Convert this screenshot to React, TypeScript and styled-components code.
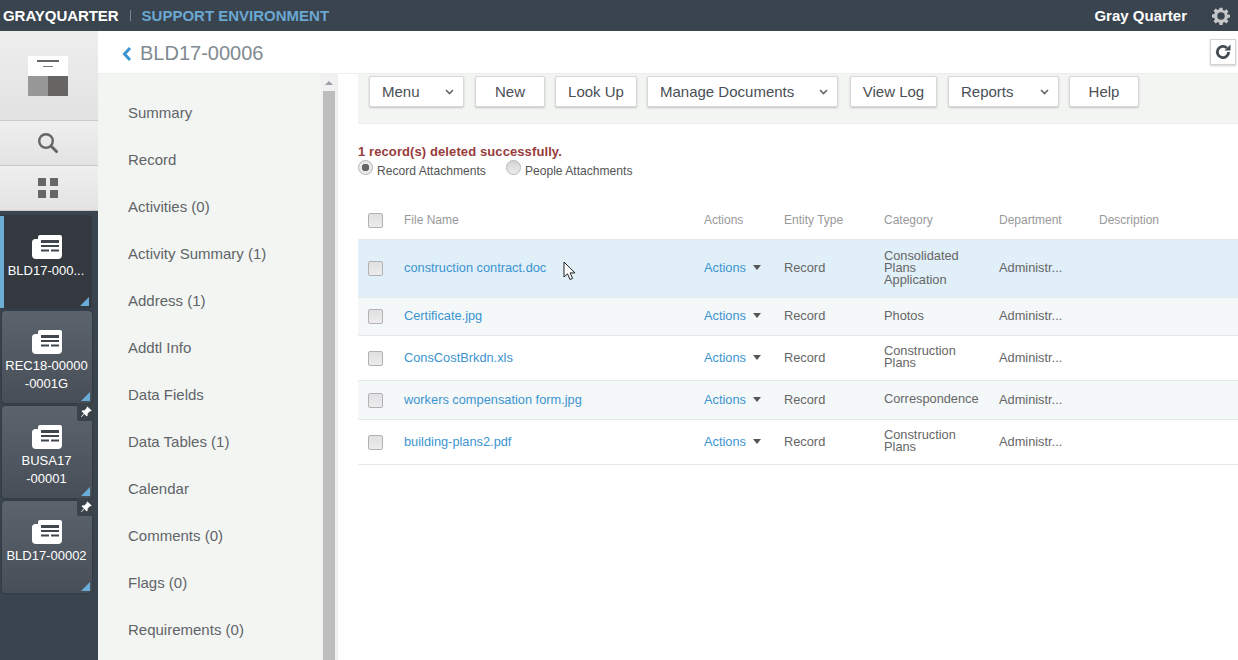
import React from "react";
import styled, { createGlobalStyle } from "styled-components";
import { BsPinAngleFill } from "react-icons/bs";

const Global = createGlobalStyle`
  html, body { margin: 0; padding: 0; background: #fff; }
  body { font-family: "Liberation Sans", Arial, sans-serif; overflow: hidden; }
  * { box-sizing: border-box; }
`;

const Page = styled.div`
  position: relative;
  width: 1238px;
  height: 660px;
  overflow: hidden;
  display: flex;
  flex-direction: column;
`;

const TopBar = styled.header`
  flex: 0 0 31px;
  background: #3a444e;
  display: flex;
  align-items: center;
  padding: 0 8px 0 3px;
  font-size: 15px;
  font-weight: 700;
  color: #fff;
`;
const Brand = styled.span`
  letter-spacing: -0.05px;
`;
const BrandBar = styled.span`
  width: 1px;
  height: 11px;
  background: #7c858d;
  margin: 0 11px 0 11px;
`;
const EnvName = styled.span`
  color: #6aa7d1;
`;
const UserName = styled.span`
  margin-left: auto;
  margin-right: 25px;
`;
const GearIcon = styled.svg`
  width: 18px;
  height: 18px;
  display: block;
`;

const Body = styled.div`
  flex: 1;
  display: flex;
  min-height: 0;
`;

const Rail = styled.aside`
  flex: 0 0 98px;
  background: #3a444e;
  display: flex;
  flex-direction: column;
`;
const RailLogo = styled.div`
  height: 90px;
  background: linear-gradient(#eeeeee, #e2e2e2);
  border-bottom: 1px solid #c9c9c9;
  padding-right: 2px;
  display: flex;
  align-items: center;
  justify-content: center;
`;
const RailButton = styled.div`
  height: 45px;
  background: linear-gradient(#efefef, #e3e3e3);
  border-bottom: 1px solid #c9c9c9;
  padding-right: 2px;
  display: flex;
  align-items: center;
  justify-content: center;
`;
const TabList = styled.div`
  margin-top: 5px;
  display: flex;
  flex-direction: column;
  gap: 3px;
`;
const Tab = styled.div<{ $active?: boolean }>`
  position: relative;
  height: 92px;
  margin: ${(p) => (p.$active ? "0 7px 0 0" : "0 6px 0 2px")};
  border-radius: ${(p) => (p.$active ? "0 3px 3px 0" : "4px")};
  background: ${(p) => (p.$active ? "#33393f" : "linear-gradient(#5b636c, #474e57)")};
  border-left: ${(p) => (p.$active ? "4px solid #6aaed8" : "0")};
  box-shadow: 0 0 2px rgba(30, 36, 42, 0.8);
  display: flex;
  flex-direction: column;
  align-items: center;
  padding: 19px ${(p) => (p.$active ? "1px" : "0")} 0 0;
  color: #fff;
  font-size: 13px;
  line-height: 18px;
  text-align: center;
`;
const TabLabel = styled.div<{ $active?: boolean }>`
  margin: 3px 0 0 ${(p) => (p.$active ? "-2px" : "-1px")};
  white-space: pre-line;
`;
const Corner = styled.span`
  position: absolute;
  right: 2px;
  bottom: 2px;
  width: 0;
  height: 0;
  border-style: solid;
  border-width: 0 0 9px 9px;
  border-color: transparent transparent #6aaed8 transparent;
`;
const PinBox = styled.span`
  position: absolute;
  top: -3px;
  right: -2px;
  width: 17px;
  height: 18px;
  background: #3a424a;
  border-radius: 0 0 0 2px;
  display: flex;
  align-items: center;
  justify-content: center;
  color: #fff;
  font-size: 12px;
`;

const Content = styled.div`
  flex: 1;
  min-width: 0;
  display: flex;
  flex-direction: column;
`;
const TitleBar = styled.div`
  flex: 0 0 43px;
  background: #fff;
  border-bottom: 1px solid #eeeeee;
  display: flex;
  align-items: center;
  padding: 3px 2px 0 24px;
`;
const Title = styled.h1`
  margin: 0 0 0 8px;
  font-size: 20px;
  font-weight: 400;
  color: #7f8a91;
`;
const RefreshButton = styled.div`
  margin: -3px 0 0 auto;
  width: 26px;
  height: 26px;
  background: #fff;
  border: 1px solid #d4d4d4;
  box-shadow: 0 1px 2px rgba(0, 0, 0, 0.2);
  display: flex;
  align-items: center;
  justify-content: center;
`;

const Split = styled.div`
  flex: 1;
  display: flex;
  min-height: 0;
`;
const SideNav = styled.nav`
  flex: 0 0 223px;
  background: #f3f5f3;
  padding: 15px 0 0 30px;
  overflow: hidden;
`;
const NavItem = styled.div`
  height: 47px;
  line-height: 47px;
  font-size: 15px;
  color: #5f6468;
`;
const ScrollTrack = styled.div`
  flex: 0 0 17px;
  background: #f1f1f1;
  padding: 0 2px;
  display: flex;
  flex-direction: column;
  border-right: 1px solid #ededed;
`;
const ScrollUp = styled.div`
  height: 17px;
  display: flex;
  justify-content: center;
  padding-top: 7px;
  &::before {
    content: "";
    width: 0;
    height: 0;
    border-style: solid;
    border-width: 0 4px 4px 4px;
    border-color: transparent transparent #a59aa8 transparent;
  }
`;
const ScrollThumb = styled.div`
  flex: 1;
  background: #bdbdbd;
`;

const Main = styled.main`
  flex: 1;
  min-width: 0;
  padding-left: 20px;
  display: flex;
  flex-direction: column;
`;
const Toolbar = styled.div`
  flex: 0 0 50px;
  background: #f3f5f3;
  border-bottom: 1px solid #ececec;
  padding: 2px 0 0 11px;
  display: flex;
  align-items: flex-start;
`;
const Btn = styled.div<{ $w: number; $gap: number; $split?: boolean }>`
  width: ${(p) => p.$w}px;
  height: 31px;
  margin-right: ${(p) => p.$gap}px;
  background: #fff;
  border: 1px solid #d8d8d8;
  border-radius: 2px;
  box-shadow: 0 1px 2px rgba(0, 0, 0, 0.2);
  display: flex;
  align-items: center;
  justify-content: ${(p) => (p.$split ? "space-between" : "center")};
  padding: ${(p) => (p.$split ? "0 9px 0 12px" : "0")};
  font-size: 15px;
  color: #4a4f55;
`;
const Caret = styled.svg`
  width: 9px;
  height: 6px;
  display: block;
`;

const Message = styled.div`
  margin-top: 20px;
  font-size: 13px;
  line-height: 15px;
  font-weight: 700;
  color: #973c3c;
  letter-spacing: 0.1px;
`;
const RadioRow = styled.div`
  display: flex;
  align-items: center;
  height: 17px;
  margin-top: 3px;
  font-size: 12.1px;
  color: #545454;
`;
const RadioDot = styled.span<{ $on?: boolean }>`
  width: 15px;
  height: 15px;
  margin: -7px 4px 0 0;
  border-radius: 50%;
  background: ${(p) =>
    p.$on
      ? "radial-gradient(circle, #666 0 3.5px, #e9e9e9 4px)"
      : "linear-gradient(#d4d4d4, #ededed)"};
  border: 1px solid #b5b5b5;
`;
const RadioText = styled.span`
  margin-right: 20px;
`;

const Table = styled.div`
  margin-top: 21px;
  width: 880px;
`;
const Row = styled.div<{ $h: number; $bg?: string }>`
  height: ${(p) => p.$h}px;
  display: grid;
  grid-template-columns: 46px 300px 80px 100px 115px 100px 1fr;
  align-items: center;
  background: ${(p) => p.$bg || "#fff"};
  border-bottom: 1px solid #e8e8e8;
  font-size: 12.8px;
  color: #666;
`;
const BodyRow = styled(Row)`
  padding-bottom: 2px;
`;
const HeadCell = styled.div`
  font-size: 12px;
  color: #999;
`;
const Check = styled.span`
  display: block;
  width: 15px;
  height: 15px;
  margin: 2px 0 0 10px;
  background: linear-gradient(#e0e0e0, #ececec);
  border: 1px solid #b5afb8;
  border-radius: 2px;
`;
const FileLink = styled.a`
  color: #3c94d1;
`;
const ActionCell = styled.div`
  display: flex;
  align-items: center;
  color: #3c94d1;
`;
const ActionCaret = styled.span`
  width: 0;
  height: 0;
  margin-left: 7px;
  border-style: solid;
  border-width: 5px 4px 0 4px;
  border-color: #555 transparent transparent transparent;
`;
const CategoryCell = styled.div`
  line-height: 12px;
  white-space: pre-line;
`;
const Pointer = styled.svg`
  position: absolute;
  left: 563px;
  top: 261px;
  width: 13px;
  height: 20px;
`;

const Doc = () => (
  <svg width="30" height="24" viewBox="0 0 30 24">
    <path d="M6 4H3.500A3.500 3.500 0 0 0 0 7.500V20a4 4 0 0 0 4 4h22a4 4 0 0 0 4-4V2a2 2 0 0 0-2-2H8a2 2 0 0 0-2 2z" fill="#fff" />
    <rect x="9" y="5" width="18" height="3" fill="#3f464e" />
    <rect x="9" y="10" width="18" height="2" fill="#3f464e" />
    <rect x="9" y="14.500" width="8" height="2" fill="#3f464e" />
    <rect x="19" y="14.500" width="8" height="2" fill="#3f464e" />
  </svg>
);

const tabs = [
  { label: "BLD17-000...", active: true },
  { label: "REC18-00000\n-0001G" },
  { label: "BUSA17\n-00001", pin: true },
  { label: "BLD17-00002", pin: true },
];

const navItems = [
  "Summary", "Record", "Activities (0)", "Activity Summary (1)", "Address (1)", "Addtl Info",
  "Data Fields", "Data Tables (1)", "Calendar", "Comments (0)", "Flags (0)", "Requirements (0)",
];

const rows = [
  { file: "construction contract.doc", cat: "Consolidated\nPlans\nApplication", h: 58, bg: "#e0eff8" },
  { file: "Certificate.jpg", cat: "Photos", h: 38, bg: "#f4f8f9" },
  { file: "ConsCostBrkdn.xls", cat: "Construction\nPlans", h: 45 },
  { file: "workers compensation form.jpg", cat: "Correspondence", h: 39, bg: "#f4f8f9" },
  { file: "building-plans2.pdf", cat: "Construction\nPlans", h: 45 },
];

const DownCaret = () => (
  <Caret viewBox="0 0 9 6">
    <path d="M1 1l3.500 3.500L8 1" fill="none" stroke="#666" strokeWidth="1.600" />
  </Caret>
);

export default function App() {
  return (
    <Page>
      <Global />
      <TopBar>
        <Brand>GRAYQUARTER</Brand>
        <BrandBar />
        <EnvName>SUPPORT ENVIRONMENT</EnvName>
        <UserName>Gray Quarter</UserName>
        <GearIcon viewBox="0 0 24 24">
          <path
            fillRule="evenodd"
            fill="#c4c6c8"
            d="M10 1h4l.6 3.100 1.800.8 2.700-1.800 2.800 2.800-1.800 2.700.8 1.800L24 10v4l-3.100.6-.8 1.800 1.800 2.700-2.800 2.800-2.700-1.800-1.800.8L14 24h-4l-.6-3.100-1.800-.8-2.700 1.800-2.800-2.800 1.800-2.700-.8-1.800L0 14v-4l3.100-.6.8-1.800-1.800-2.700 2.800-2.800 2.700 1.800 1.800-.8zM12 7a5 5 0 1 0 0 10 5 5 0 0 0 0-10z"
          />
        </GearIcon>
      </TopBar>
      <Body>
        <Rail>
          <RailLogo>
            <svg width="40" height="40" viewBox="0 0 40 40">
              <rect width="40" height="20" fill="#fff" />
              <rect x="9" y="4" width="22" height="2" fill="#666" />
              <rect x="15" y="10" width="10" height="1" fill="#777" />
              <rect y="20" width="20" height="20" fill="#979897" />
              <rect x="20" y="20" width="20" height="20" fill="#666563" />
            </svg>
          </RailLogo>
          <RailButton>
            <svg width="20" height="20" viewBox="0 0 20 20">
              <circle cx="8" cy="8" r="6.800" fill="none" stroke="#666" strokeWidth="2.400" />
              <path d="M13 13L18.500 18.500" stroke="#666" strokeWidth="3" strokeLinecap="round" />
            </svg>
          </RailButton>
          <RailButton>
            <svg width="20" height="20" viewBox="0 0 20 20">
              <rect width="8" height="8" fill="#666" />
              <rect x="12" width="8" height="8" fill="#666" />
              <rect y="12" width="8" height="8" fill="#666" />
              <rect x="12" y="12" width="8" height="8" fill="#666" />
            </svg>
          </RailButton>
          <TabList>
            {tabs.map((t) => (
              <Tab key={t.label} $active={t.active}>
                <Doc />
                <TabLabel $active={t.active}>{t.label}</TabLabel>
                <Corner />
                {t.pin && (
                  <PinBox>
                    <BsPinAngleFill />
                  </PinBox>
                )}
              </Tab>
            ))}
          </TabList>
        </Rail>
        <Content>
          <TitleBar>
            <svg width="10" height="16" viewBox="0 0 10 16">
              <path d="M8 2L2.500 8 8 14" fill="none" stroke="#3a94d2" strokeWidth="3" />
            </svg>
            <Title>BLD17-00006</Title>
            <RefreshButton>
              <svg width="18" height="18" viewBox="0 0 24 24">
                <path d="M19.500 12a7.500 7.500 0 1 1-2.300-5.400" fill="none" stroke="#444c54" strokeWidth="3.800" />
                <path d="M22 2v8h-8z" fill="#444c54" />
              </svg>
            </RefreshButton>
          </TitleBar>
          <Split>
            <SideNav>
              {navItems.map((n) => (
                <NavItem key={n}>{n}</NavItem>
              ))}
            </SideNav>
            <ScrollTrack>
              <ScrollUp />
              <ScrollThumb />
            </ScrollTrack>
            <Main>
              <Toolbar>
                <Btn $w={95} $gap={11} $split>Menu<DownCaret /></Btn>
                <Btn $w={70} $gap={10}>New</Btn>
                <Btn $w={82} $gap={10}>Look Up</Btn>
                <Btn $w={191} $gap={12} $split>Manage Documents<DownCaret /></Btn>
                <Btn $w={87} $gap={11}>View Log</Btn>
                <Btn $w={111} $gap={10} $split>Reports<DownCaret /></Btn>
                <Btn $w={70} $gap={0}>Help</Btn>
              </Toolbar>
              <Message>1 record(s) deleted successfully.</Message>
              <RadioRow>
                <RadioDot $on />
                <RadioText>Record Attachments</RadioText>
                <RadioDot />
                <RadioText>People Attachments</RadioText>
              </RadioRow>
              <Table>
                <Row $h={40}>
                  <Check />
                  <HeadCell>File Name</HeadCell>
                  <HeadCell>Actions</HeadCell>
                  <HeadCell>Entity Type</HeadCell>
                  <HeadCell>Category</HeadCell>
                  <HeadCell>Department</HeadCell>
                  <HeadCell>Description</HeadCell>
                </Row>
                {rows.map((r) => (
                  <BodyRow key={r.file} $h={r.h} $bg={r.bg}>
                    <Check />
                    <FileLink>{r.file}</FileLink>
                    <ActionCell>Actions<ActionCaret /></ActionCell>
                    <div>Record</div>
                    <CategoryCell>{r.cat}</CategoryCell>
                    <div>Administr...</div>
                    <div />
                  </BodyRow>
                ))}
              </Table>
            </Main>
          </Split>
        </Content>
      </Body>
      <Pointer viewBox="0 0 13 20">
        <path d="M1 1v15l3.500-3.200 2.500 5.700 2.600-1.100-2.500-5.500H12z" fill="#fff" stroke="#222" strokeWidth="1" />
      </Pointer>
    </Page>
  );
}
